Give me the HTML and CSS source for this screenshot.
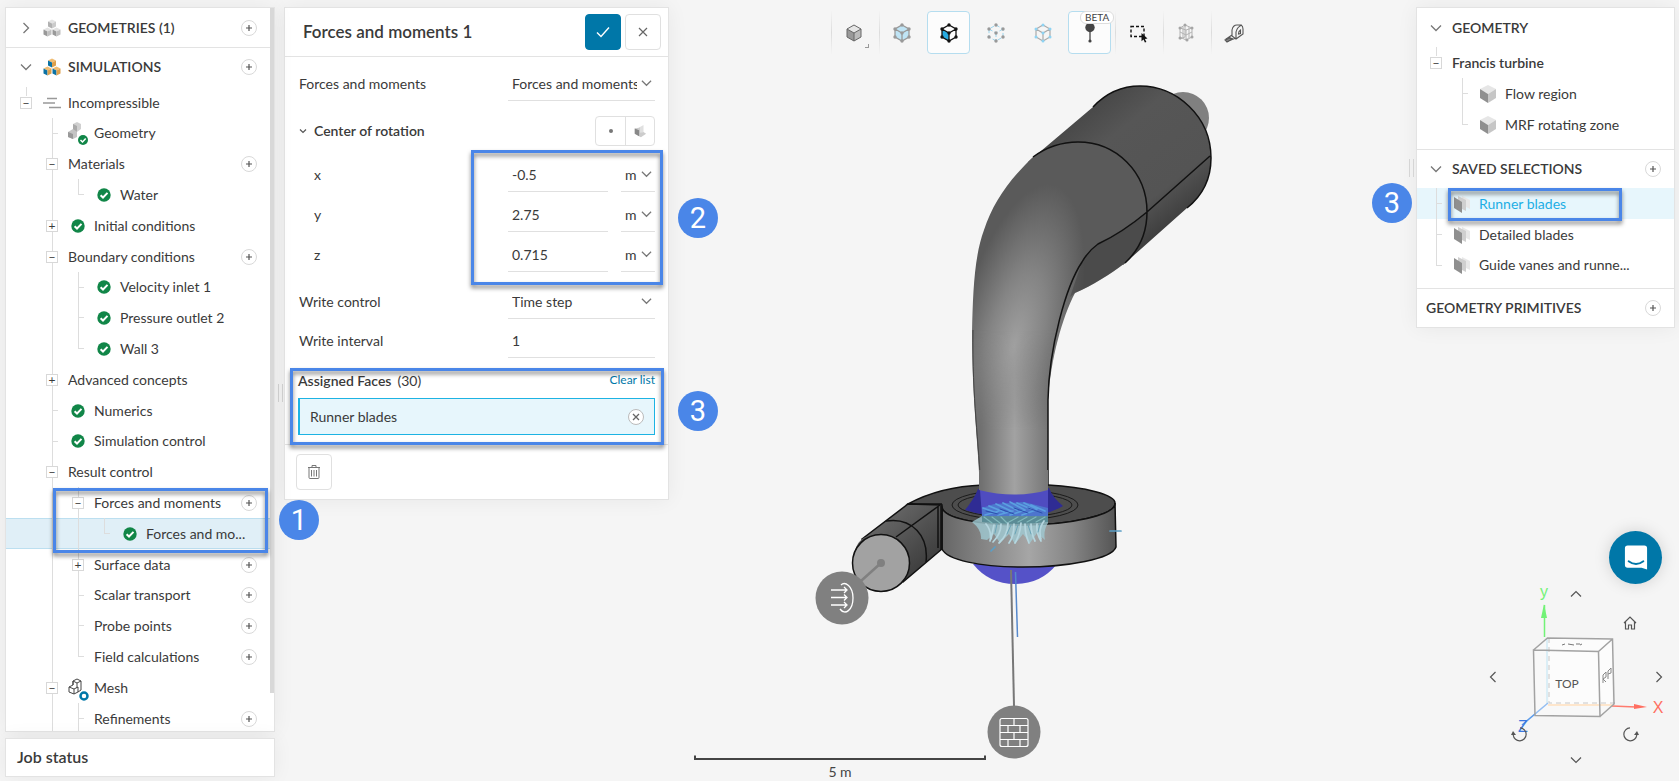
FILE: index.html
```html
<!DOCTYPE html>
<html lang="en">
<head>
<meta charset="utf-8">
<title>Forces and moments 1</title>
<link rel="stylesheet" href="styles.css">
</head>
<body>
<svg class="sprite" aria-hidden="true">
  <symbol id="check" viewBox="0 0 14 14"><circle cx="7" cy="7" r="6.7" fill="#118648"/><path d="M3.6 7.2l2.4 2.3 4.5-4.6" fill="none" stroke="#fff" stroke-width="2"/></symbol>
  <symbol id="plus" viewBox="0 0 16 16"><path d="M5 8h6M8 5v6" fill="none" stroke="#555" stroke-width="1.2"/></symbol>
  <symbol id="down" viewBox="0 0 12 12"><path d="M1 3.500l5 5 5-5" fill="none" stroke="#777" stroke-width="1.300"/></symbol>
  <symbol id="solid" viewBox="0 0 18 20"><path d="M9 1l8 4-8 5-8-5z" fill="#e6e6e6"/><path d="M1 5l8 5v9l-8-5z" fill="#8f8f8f"/><path d="M17 5l-8 5v9l8-5z" fill="#c6c6c6"/></symbol>
  <symbol id="faces" viewBox="0 0 18 18"><path d="M9 1l8 4v9l-8-4z" fill="#e8e8e8"/><path d="M5 1l8 4v11l-8-4z" fill="#cfcfcf"/><path d="M1 2l8 5v11l-8-5z" fill="#8f8f8f"/></symbol>
  <symbol id="cubes" viewBox="0 0 18 17"><path d="M9 0l4 2-4 2-4-2z" fill="#e3e3e3"/><path d="M5 2l4 2v5L5 7z" fill="#b1b1b1"/><path d="M13 2L9 4v5l4-2z" fill="#cbcbcb"/><path d="M4.500 8l4 2-4 2-4-2zM13.500 8l4 2-4 2-4-2z" fill="#e3e3e3"/><path d="M.5 10l4 2v5l-4-2zM9.500 10l4 2v5l-4-2z" fill="#999"/><path d="M8.500 10l-4 2v5l4-2zM17.500 10l-4 2v5l4-2z" fill="#c0c0c0"/></symbol>
  <symbol id="simcubes" viewBox="0 0 18 17"><path d="M9 0l4 2-4 2-4-2z" fill="#f0bd73"/><path d="M5 2l4 2v5L5 7z" fill="#0b72a4"/><path d="M13 2L9 4v5l4-2z" fill="#dda04c"/><path d="M4.500 8l4 2-4 2-4-2zM13.500 8l4 2-4 2-4-2z" fill="#f0bd73"/><path d="M.5 10l4 2v5l-4-2zM9.500 10l4 2v5l-4-2z" fill="#0b72a4"/><path d="M8.500 10l-4 2v5l4-2zM17.500 10l-4 2v5l4-2z" fill="#dda04c"/></symbol>
</svg>

<div class="app">
  <div class="left">
    <nav class="panel tree" aria-label="Project">
      <div class="tree-body">
        <div class="head ruled"><span class="cell"><svg class="chev side"><use href="#down"/></svg></span><span class="cell"><svg class="i18"><use href="#cubes"/></svg></span><span class="label">GEOMETRIES (1)</span><button class="add" aria-label="Add geometry"><svg><use href="#plus"/></svg></button></div>
        <div class="head"><span class="cell"><svg class="chev"><use href="#down"/></svg></span><span class="cell"><svg class="i18"><use href="#simcubes"/></svg></span><span class="label">SIMULATIONS</span><button class="add" aria-label="Add simulation"><svg><use href="#plus"/></svg></button></div>
        <div class="nodes">
          <div class="node"><span class="cell stub"><i class="box">−</i></span><span class="cell"><svg class="i18" viewBox="0 0 18 12"><path d="M4 1.500h10M0 6h12M6 10.500h12" stroke="#999" stroke-width="1.500"/></svg></span><span class="label">Incompressible</span></div>
          <div class="node"><span class="cell"></span><span class="cell line tee"></span><span class="cell"><svg class="i22" viewBox="0 0 22 22"><path d="M6 2l4-2 4 2v5l-4 3-4-1z" fill="#d0d0d0"/><path d="M6 2l4 2v6l-4-1z" fill="#aaa"/><path d="M1 10l5-3 4 3v5l-4 2-5-2z" fill="#c4c4c4"/><path d="M1 10l5 2v5l-5-2z" fill="#999"/><circle cx="16" cy="18" r="5" fill="#118648"/><path d="M13.500 18l2 2 3.200-3.500" stroke="#fff" stroke-width="1.500" fill="none"/></svg></span><span class="label">Geometry</span></div>
          <div class="node"><span class="cell"></span><span class="cell line"><i class="box">−</i></span><span class="label">Materials</span><button class="add" aria-label="Add material"><svg><use href="#plus"/></svg></button></div>
          <div class="node"><span class="cell"></span><span class="cell line"></span><span class="cell line end"></span><span class="cell"><svg class="i14"><use href="#check"/></svg></span><span class="label">Water</span></div>
          <div class="node"><span class="cell"></span><span class="cell line"><i class="box">+</i></span><span class="cell"><svg class="i14"><use href="#check"/></svg></span><span class="label">Initial conditions</span></div>
          <div class="node"><span class="cell"></span><span class="cell line"><i class="box">−</i></span><span class="label">Boundary conditions</span><button class="add" aria-label="Add boundary condition"><svg><use href="#plus"/></svg></button></div>
          <div class="node"><span class="cell"></span><span class="cell line"></span><span class="cell line tee"></span><span class="cell"><svg class="i14"><use href="#check"/></svg></span><span class="label">Velocity inlet 1</span></div>
          <div class="node"><span class="cell"></span><span class="cell line"></span><span class="cell line tee"></span><span class="cell"><svg class="i14"><use href="#check"/></svg></span><span class="label">Pressure outlet 2</span></div>
          <div class="node"><span class="cell"></span><span class="cell line"></span><span class="cell line end"></span><span class="cell"><svg class="i14"><use href="#check"/></svg></span><span class="label">Wall 3</span></div>
          <div class="node"><span class="cell"></span><span class="cell line"><i class="box">+</i></span><span class="label">Advanced concepts</span></div>
          <div class="node"><span class="cell"></span><span class="cell line tee"></span><span class="cell"><svg class="i14"><use href="#check"/></svg></span><span class="label">Numerics</span></div>
          <div class="node"><span class="cell"></span><span class="cell line tee"></span><span class="cell"><svg class="i14"><use href="#check"/></svg></span><span class="label">Simulation control</span></div>
          <div class="node"><span class="cell"></span><span class="cell line"><i class="box">−</i></span><span class="label">Result control</span></div>
          <div class="node"><span class="cell"></span><span class="cell line"></span><span class="cell line"><i class="box">−</i></span><span class="label">Forces and moments</span><button class="add" aria-label="Add forces and moments"><svg><use href="#plus"/></svg></button></div>
          <div class="node current"><span class="cell"></span><span class="cell line"></span><span class="cell line"></span><span class="cell line end"></span><span class="cell"><svg class="i14"><use href="#check"/></svg></span><span class="label">Forces and mo...</span></div>
          <div class="node"><span class="cell"></span><span class="cell line"></span><span class="cell line"><i class="box">+</i></span><span class="label">Surface data</span><button class="add" aria-label="Add surface data"><svg><use href="#plus"/></svg></button></div>
          <div class="node"><span class="cell"></span><span class="cell line"></span><span class="cell line tee"></span><span class="label">Scalar transport</span><button class="add" aria-label="Add scalar transport"><svg><use href="#plus"/></svg></button></div>
          <div class="node"><span class="cell"></span><span class="cell line"></span><span class="cell line tee"></span><span class="label">Probe points</span><button class="add" aria-label="Add probe point"><svg><use href="#plus"/></svg></button></div>
          <div class="node"><span class="cell"></span><span class="cell line"></span><span class="cell line end"></span><span class="label">Field calculations</span><button class="add" aria-label="Add field calculation"><svg><use href="#plus"/></svg></button></div>
          <div class="node"><span class="cell"></span><span class="cell line"><i class="box">−</i></span><span class="cell"><svg class="i22" viewBox="0 0 22 22" fill="none" stroke="#444"><path d="M6 4l4-2 4 2v9l-3 2-4 2-5-2v-5l4-2zM6 4l4 2 4-2M10 6v5M2 10l5 2 4-2M7 12v5M6 4v4M11 10v5"/><circle cx="17" cy="19" r="3.500" fill="#fff" stroke="#0077a8" stroke-width="2.500"/></svg></span><span class="label">Mesh</span></div>
          <div class="node"><span class="cell"></span><span class="cell line"></span><span class="cell line tee"></span><span class="label">Refinements</span><button class="add" aria-label="Add refinement"><svg><use href="#plus"/></svg></button></div>
        </div>
      </div>
      <div class="callout callout-tree"></div>
      <span class="badge badge-tree">1</span>
    </nav>
    <section class="panel job">Job status</section>
  </div>

  <div class="splitter"></div>

  <div class="middle">
    <form class="panel form">
      <header class="form-head">
        <h1>Forces and moments 1</h1>
        <button type="button" class="btn primary" aria-label="Apply"><svg viewBox="0 0 16 16"><path d="M2 8.500l4 4 8-9" fill="none" stroke="#fff" stroke-width="1.400"/></svg></button>
        <button type="button" class="btn" aria-label="Close"><svg viewBox="0 0 16 16"><path d="M4 4l8 8M12 4l-8 8" fill="none" stroke="#666" stroke-width="1.200"/></svg></button>
      </header>
      <div class="field first"><label for="kind">Forces and moments</label><span class="pick"><select id="kind"><option>Forces and moments</option></select><svg class="chev"><use href="#down"/></svg></span></div>
      <div class="group"><svg class="caret" viewBox="0 0 8 8"><path d="M1 2.500l3 3 3-3" fill="none" stroke="#555" stroke-width="1.200"/></svg><h2>Center of rotation</h2>
        <span class="pair"><button type="button" aria-label="Pick point"><svg viewBox="0 0 16 16"><circle cx="8" cy="8" r="2.300" fill="#777"/></svg></button><button type="button" aria-label="Pick from geometry"><svg viewBox="0 0 16 16"><path d="M7 4l5-3v8l-5 2z" fill="#e0e0e0"/><path d="M2 5l6-1v6l4-1 3 2-6 4-7-4z" fill="#ccc"/><path d="M2 5l5 2v7l-5-3z" fill="#888"/></svg></button></span></div>
      <div class="field axis"><label for="x">x</label><input id="x" value="-0.5"><span class="pick unit"><select aria-label="x unit"><option>m</option></select><svg class="chev"><use href="#down"/></svg></span></div>
      <div class="field axis"><label for="y">y</label><input id="y" value="2.75"><span class="pick unit"><select aria-label="y unit"><option>m</option></select><svg class="chev"><use href="#down"/></svg></span></div>
      <div class="field axis"><label for="z">z</label><input id="z" value="0.715"><span class="pick unit"><select aria-label="z unit"><option>m</option></select><svg class="chev"><use href="#down"/></svg></span></div>
      <div class="field tall"><label for="wc">Write control</label><span class="pick"><select id="wc"><option>Time step</option></select><svg class="chev"><use href="#down"/></svg></span></div>
      <div class="field"><label for="wi">Write interval</label><input id="wi" value="1"></div>
      <div class="assigned">
        <div class="assigned-head"><h2>Assigned Faces</h2><span>(30)</span><a href="#clear">Clear list</a></div>
        <div class="chip">Runner blades<button type="button" aria-label="Remove Runner blades"><svg viewBox="0 0 14 14"><path d="M4 4l6 6M10 4l-6 6" stroke="#666" stroke-width="1.300"/></svg></button></div>
      </div>
      <footer><button type="button" class="btn" aria-label="Delete"><svg viewBox="0 0 16 16" fill="none" stroke="#777"><path d="M2 3.500h12M6 3V1.500h4V3M3 4v9.500q0 1 1 1h8q1 0 1-1V4M5.500 6v6.500M8 6v6.500M10.500 6v6.500"/></svg></button></footer>
      <div class="callout callout-axes"></div>
      <div class="callout callout-faces"></div>
      <span class="badge badge-axes">2</span>
      <span class="badge badge-faces">3</span>
    </form>
  </div>

  <main class="stage">
    <svg class="model" viewBox="669 0 735 781" role="img" aria-label="Francis turbine model">
      <defs>
        <linearGradient id="low" x1="981" x2="1048" y1="0" y2="0" gradientUnits="userSpaceOnUse"><stop offset="0" stop-color="#707070"/><stop offset=".5" stop-color="#a2a2a2"/><stop offset="1" stop-color="#777"/></linearGradient>
        <radialGradient id="bend" cx="0" cy="0" r="1" gradientUnits="userSpaceOnUse" gradientTransform="translate(1014 345) rotate(14) scale(60 165)"><stop offset="0" stop-color="#a0a0a0"/><stop offset=".45" stop-color="#848484"/><stop offset="1" stop-color="#5a5a5a"/></radialGradient>
        <linearGradient id="top" x1="1080" y1="115" x2="1170" y2="230" gradientUnits="userSpaceOnUse"><stop offset="0" stop-color="#484848"/><stop offset=".25" stop-color="#565656"/><stop offset=".75" stop-color="#545454"/><stop offset="1" stop-color="#3c3c3c"/></linearGradient>
        <linearGradient id="fade" x1="0" x2="0" y1="330" y2="430" gradientUnits="userSpaceOnUse"><stop offset="0" stop-color="#fff" stop-opacity="0"/><stop offset="1" stop-color="#fff"/></linearGradient>
        <mask id="lowmask"><path d="M960 320h120v180H960z" fill="url(#fade)"/></mask>
        <linearGradient id="side" x1="942" x2="1116" y1="0" y2="0" gradientUnits="userSpaceOnUse"><stop offset="0" stop-color="#666"/><stop offset=".5" stop-color="#a6a6a6"/><stop offset=".75" stop-color="#848484"/><stop offset="1" stop-color="#555"/></linearGradient>
        <linearGradient id="duct" x1="880" y1="520" x2="925" y2="570" gradientUnits="userSpaceOnUse"><stop offset="0" stop-color="#666"/><stop offset="1" stop-color="#3c3c3c"/></linearGradient>
        <clipPath id="pipeclip"><path d="M972 320h92c-10 30-15 50-16 80v96H980c-1-50-8-90-8-176z"/></clipPath>
      </defs>
      <circle cx="1183" cy="118" r="26" fill="#808080"/>
      <path d="M1093 107C1107 92 1122 86 1140 86c36 0 71 30 71 72 0 21-9 38-24 50l-64 57-95-103z" fill="url(#top)"/>
      <path d="M1033 157C1048 146 1062 142 1078 142c38 0 69 30 69 70 0 21-8 38-22 51-16 12-32 22-50 30-13 25-24 65-27 107l0 96H980c-1-50-8-90-8-164 1-38 2-75 12-102 9-27 24-49 49-73z" fill="url(#bend)"/>
      <path d="M973 330l110-10-35 80v96H980c-1-50-8-90-7-166z" fill="url(#low)" mask="url(#lowmask)" clip-path="url(#pipeclip)"/>
      <path d="M1147 212c-18 15-34 25-49 32-7 5-12 11-16 18l-12 35 5-4c18-8 34-18 50-30 14-13 22-30 22-51z" fill="#303030" opacity=".35"/>
      <g fill="none" stroke="#111" stroke-width="1.500">
        <path d="M1093 107C1107 92 1122 86 1140 86c36 0 71 30 71 72 0 21-9 38-24 50M1033 157C1048 146 1062 142 1078 142c38 0 69 30 69 70 0 21-8 38-22 51M1210 156l-63 56c-18 15-34 25-49 32-7 5-12 11-16 18-16 24-33 85-34 138v92"/>
        <path d="M973 330c-1 70 6 110 8 164" stroke="#444" stroke-width="1"/>
      </g>
      <path d="M973 564q16 20 42 20t42-20z" fill="#5552c8"/>
      <path d="M908 504c22-12 48-18 75-19h65c38 2 67 10 67 18 1 12-45 22-92 22-46 0-80-7-81-18z" fill="#4d4d4d" stroke="#111" stroke-width="1.500"/>
      <path d="M942 507c1 11 35 18 81 18 47 0 93-10 92-22l1 44c-4 12-48 20-93 20-43 0-76-7-81-18z" fill="url(#side)" stroke="#111" stroke-width="1.500"/>
      <g fill="none" stroke="#1b1b1b"><ellipse cx="1015" cy="505" rx="63" ry="15"/><ellipse cx="1015" cy="505" rx="57" ry="12"/></g>
      <path d="M978 489q-4 10-13 21 20 7 50 7t48-11q-10-8-14-18z" fill="#2f2c94"/>
      <path d="M980 490h68v26q-33 4-66 0z" fill="#4f4cc0"/>
      <path d="M979 470h69v20q-33 9-69 0z" fill="url(#low)"/>
      <path d="M982 508l12-4 30-2 24 6v8h-66z" fill="#4c7fd0" opacity=".8"/>
      <path d="M982 516h66v7q-5 8-3 17l-8-7-7 10-7-9-8 10-6-10-9 9-6-9-7 6-6-1q1-9-9-17z" fill="#9fc9d2" opacity=".8"/>
      <path d="M982 516h66v6q-33 4-66 0z" fill="#467d88" opacity=".7"/>
      <g fill="none" stroke-width="1.700" stroke-linecap="round">
        <path d="M983 508l14 5M989 506l15 6M996 504l15 7M1003 503l14 7M1010 502l15 8M1017 503l14 6M1024 503l13 6M1031 505l14 6M985 515l14-4M998 515l15-4M1010 515l15-5M1022 515l14-5" stroke="#5a9fe0"/>
        <path d="M986 511l12 3M1000 509l14 5M1014 508l14 5M1028 508l14 5" stroke="#2c4eac" stroke-width="1"/>
        <path d="M984 517l8 6M992 517l8 6M1001 517l6 6M1009 522l9-5M1018 522l9-5M1027 522l9-5M1036 522l9-5" stroke="#80b8bb" stroke-width="1.200"/>
        <path d="M986 524q6 7 4 17M994 525l-3 14M1001 524q0 10-8 18M1008 523q0 12-9 20M1014 524q0 12-5 19M1021 523q-1 12-6 20M1025 524q0 10 4 19M1031 524q0 9 4 17M1037 524q-1 9 4 17M1044 521q-6 8-3 18" stroke="#b5d6df"/>
        <path d="M997 524l-2 9M1011 525l-4 9M1018 525l-3 9M1028 525l3 9M1040 524l-2 8" stroke="#6ba5b8" stroke-width="1"/>
        <path d="M1110 531h11M995 547l-4 4" stroke="#5b9fc6"/>
      </g>
      <path d="M862 539l46-35 34 1v44l-39 33z" fill="url(#duct)" stroke="#111" stroke-width="1.500"/>
      <path d="M853 559q2-14 9-20c12-8 34-4 41 14 3 11 1 22-2 31z" fill="#5a5a5a"/>
      <circle cx="881" cy="563" r="28.500" fill="#a2a2a2" stroke="#111" stroke-width="1.500"/>
      <path d="M886 521c26-4 43 15 40 41M896 537l44-32M908 504h34M938 507v41M941 506v44" fill="none" stroke="#111" stroke-width="1.500"/>
      <path d="M881 563l-39 35" stroke="#808080" stroke-width="2.500"/><circle cx="881" cy="563" r="4" fill="#808080"/>
      <circle cx="842" cy="598" r="26.500" fill="#808080"/>
      <g fill="none" stroke="#fff" stroke-width="1.300"><path d="M831 590h15M831 597.500h15M831 605h15M844 587l3 3-3 3M844 594.500l3 3-3 3M844 602l3 3-3 3M841 585c4-4 12 1 12 13s-8 18-13 11"/></g>
      <path d="M1011 570l3 136" stroke="#777" stroke-width="2"/><path d="M1015.500 572l2 65" stroke="#5588cc" stroke-width="1.500"/>
      <circle cx="1014" cy="732" r="26.500" fill="#808080"/>
      <path d="M1002 718.500h24q2 0 2 2v24q0 2-2 2h-24q-2 0-2-2v-24q0-2 2-2zM1000 725.500h28M1000 732.500h28M1000 739.500h28M1014 718v7M1008 726v7M1020 726v7M1014 733v7M1008 740v6M1020 740v6" fill="none" stroke="#fff" stroke-width="1.200"/>
      <path d="M695 755.500v3.500h290v-3.500" fill="none" stroke="#444" stroke-width="2"/>
      <text class="scale" x="840" y="777" text-anchor="middle">5 m</text>
    </svg>
    <div class="toolbar">
      <button class="tool split" aria-label="Solid view"><svg viewBox="0 0 24 24"><path d="M12 4l7 4-7 4-7-4z" fill="#e5e5e5"/><path d="M5 8l7 4v8l-7-4z" fill="#999"/><path d="M19 8l-7 4v8l7-4z" fill="#bbb"/><path d="M12 4l7 4v8l-7 4-7-4V8zM5 8l7 4 7-4M12 12v8" fill="none" stroke="#666"/></svg><i class="corner"></i></button>
      <button class="tool split" aria-label="Select volumes"><svg viewBox="0 0 24 24"><path d="M12 4l7 4v8l-7 4-7-4V8z" fill="#bfe4f5"/><path d="M12 4l7 4v8l-7 4-7-4V8zM5 8l7 4 7-4M12 12v8" fill="none" stroke="#999" stroke-width="1.300"/><g fill="#999"><circle cx="12" cy="4" r="1.700"/><circle cx="19" cy="8" r="1.700"/><circle cx="19" cy="16" r="1.700"/><circle cx="12" cy="20" r="1.700"/><circle cx="5" cy="16" r="1.700"/><circle cx="5" cy="8" r="1.700"/><circle cx="12" cy="12" r="1.700"/></g></svg></button>
      <button class="tool on" aria-label="Select faces"><svg viewBox="0 0 24 24"><path d="M5 8l7 4v8l-7-4z" fill="#28abe2"/><path d="M12 4l7 4v8l-7 4-7-4V8zM5 8l7 4 7-4M12 12v8" fill="none" stroke="#111" stroke-width="1.300"/><g fill="#111"><circle cx="12" cy="4" r="1.700"/><circle cx="19" cy="8" r="1.700"/><circle cx="19" cy="16" r="1.700"/><circle cx="12" cy="20" r="1.700"/><circle cx="5" cy="16" r="1.700"/><circle cx="5" cy="8" r="1.700"/><circle cx="12" cy="12" r="1.700"/></g></svg></button>
      <button class="tool" aria-label="Select vertices"><svg viewBox="0 0 24 24"><path d="M12 4l7 4v8l-7 4-7-4V8zM5 8l7 4 7-4M12 12v8" fill="none" stroke="#9cd6ef" stroke-dasharray="4 2"/><g fill="#999"><circle cx="12" cy="4" r="1.700"/><circle cx="19" cy="8" r="1.700"/><circle cx="19" cy="16" r="1.700"/><circle cx="12" cy="20" r="1.700"/><circle cx="5" cy="16" r="1.700"/><circle cx="5" cy="8" r="1.700"/><circle cx="12" cy="12" r="1.700"/></g></svg></button>
      <button class="tool" aria-label="Select edges"><svg viewBox="0 0 24 24"><path d="M12 4l7 4v8l-7 4-7-4V8zM5 8l7 4 7-4M12 12v8" fill="none" stroke="#aaa" stroke-width="1.200"/><g fill="#8ed3f3"><circle cx="12" cy="4" r="1.500"/><circle cx="19" cy="8" r="1.500"/><circle cx="19" cy="16" r="1.500"/><circle cx="12" cy="20" r="1.500"/><circle cx="5" cy="16" r="1.500"/><circle cx="5" cy="8" r="1.500"/><circle cx="12" cy="12" r="1.500"/></g></svg></button>
      <button class="tool on" aria-label="Probe"><svg viewBox="0 0 24 24"><circle cx="12" cy="6.500" r="4.700" fill="#444"/><path d="M12 7v13" stroke="#444" stroke-width="1.300"/><circle cx="12" cy="20" r="1.600" fill="#444"/></svg><span class="beta">BETA</span></button>
      <button class="tool split" aria-label="Box select"><svg viewBox="0 0 24 24"><path d="M5 5.500h13v10H5z" fill="none" stroke="#111" stroke-width="1.400" stroke-dasharray="3 2"/><path d="M15.500 12l6 5.500-2.600.4 1.500 3-1.500.7-1.400-3-2 1.600z" fill="#111"/></svg></button>
      <button class="tool split" aria-label="Mesh clip"><svg viewBox="0 0 24 24" fill="none" stroke="#b3b3b3"><path d="M6 7l5-3 7 3v9l-6 3-6-3zM6 7l6 2 6-2M12 9v10M6 11l6 3 6-3M9 6v11M15 6v11M11 4v12l-5 2"/><g fill="#a5a5a5" stroke="none"><circle cx="6" cy="7" r="1.500"/><circle cx="11" cy="4" r="1.500"/><circle cx="18" cy="7" r="1.500"/><circle cx="18" cy="16" r="1.500"/><circle cx="13" cy="19" r="1.500"/><circle cx="6" cy="17" r="1.500"/></g></svg></button>
      <button class="tool split" aria-label="Measure"><svg viewBox="0 0 24 24" fill="none" stroke="#555" stroke-width="1.100"><path d="M10 15V9q1-5 5-5h4q2 1 2 4v5l-7 5-4-3zM14 18v-7q1-5 6-7M16.500 13q0-3 2-4v3.500zM10 14l-6 4 2 2 8-3M5 18l4 1M7 16.500l4 1.500"/><path d="M3 19l5-2 2 1-5 3z" fill="#888"/></svg></button>
    </div>
  </main>

  <aside class="right">
    <div class="panel scene">
      <section class="block">
        <div class="head"><span class="cell"><svg class="chev"><use href="#down"/></svg></span><span class="label">GEOMETRY</span></div>
        <div class="node strong"><span class="cell stub"><i class="box">−</i></span><span class="label">Francis turbine</span></div>
        <div class="node"><span class="cell"></span><span class="cell line tee"></span><span class="cell"><svg class="cube"><use href="#solid"/></svg></span><span class="label">Flow region</span></div>
        <div class="node"><span class="cell"></span><span class="cell line end"></span><span class="cell"><svg class="cube"><use href="#solid"/></svg></span><span class="label">MRF rotating zone</span></div>
      </section>
      <section class="block saved">
        <div class="head"><span class="cell"><svg class="chev"><use href="#down"/></svg></span><span class="label">SAVED SELECTIONS</span><button class="add" aria-label="Add selection"><svg><use href="#plus"/></svg></button></div>
        <div class="node picked"><span class="cell line tee"></span><span class="cell"><svg class="i18"><use href="#faces"/></svg></span><span class="label">Runner blades</span></div>
        <div class="node"><span class="cell line tee"></span><span class="cell"><svg class="i18"><use href="#faces"/></svg></span><span class="label">Detailed blades</span></div>
        <div class="node"><span class="cell line end"></span><span class="cell"><svg class="i18"><use href="#faces"/></svg></span><span class="label">Guide vanes and runne...</span></div>
      </section>
      <section class="prims"><div class="head"><span class="label">GEOMETRY PRIMITIVES</span><button class="add" aria-label="Add primitive"><svg><use href="#plus"/></svg></button></div></section>
      <span class="grip"></span>
      <div class="callout callout-scene"></div>
      <span class="badge badge-scene">3</span>
    </div>
    <div class="corner-tools">
      <button class="chat" aria-label="Open chat"><svg viewBox="0 0 26 28"><path d="M4 1h18q3 0 3 3v23l-6-2H4q-3 0-3-3V4q0-3 3-3z" fill="#fff"/><path d="M5 18q8 6 16 0" fill="none" stroke="#0077a8" stroke-width="2" stroke-linecap="round"/></svg></button>
      <div class="navcube">
        <svg class="cube3d" viewBox="1484 575 191 200" role="img" aria-label="View cube">
          <g fill="none">
            <path d="M1548 637l64 1.500 0 64.500-2 1-61-.500z" fill="#fff" opacity=".6"/>
            <path d="M1547 704v-65" stroke="#b8dff0" stroke-width="1.500"/><path d="M1544.500 605v32" stroke="#72f277" stroke-width="1.500"/><path d="M1544 604l-3 14h6z" fill="#72f277"/>
            <path d="M1548 705h64" stroke="#ffcf9a" stroke-width="1.500"/><path d="M1612 706l24 1" stroke="#ff7b6e" stroke-width="1.500"/><path d="M1647 707l-13-3v5z" fill="#ff6f61"/>
            <path d="M1548 703l-26 22" stroke="#5b9bea" stroke-width="1.500"/>
            <path d="M1549 638v65h66" stroke="#aaa" stroke-dasharray="5 4"/>
            <path d="M1533.500 650l65 1.500 1.500 65-65-1zM1533.500 650l14-12 65 1 1.500 65-14 12.500M1598.500 651.500l14-12.500" fill="#fff" fill-opacity=".35" stroke="#a2a2a2" stroke-width="1.500"/>
            <path d="M1562 645l3-1M1568 644l6 1M1576 644h4M1582 644l-2 1" stroke="#777"/>
            <path d="M1603 683v-8l3-3v5l-3 2 3 3M1608 679v-8l3-3v5l-3 1" stroke="#888"/>
          </g>
          <text class="face" x="1567" y="688" text-anchor="middle">TOP</text>
          <text class="axis-name" x="1544" y="597" text-anchor="middle" fill="#72f277">y</text>
          <text class="axis-name" x="1658" y="713" text-anchor="middle" fill="#ff6f61">X</text>
          <text class="axis-name" x="1523" y="732" text-anchor="middle" fill="#3c78e0">Z</text>
        </svg>
        <button class="turn up" aria-label="Rotate up"><svg viewBox="0 0 14 14"><path d="M2 9.500l5-5 5 5" /></svg></button>
        <button class="turn home" aria-label="Home view"><svg viewBox="0 0 14 14"><path d="M1 7l6-6 6 6M2.500 6v7H5.500V9h3v4h3V6"/></svg></button>
        <button class="turn west" aria-label="Rotate left"><svg viewBox="0 0 14 14"><path d="M9.500 2l-5 5 5 5"/></svg></button>
        <button class="turn east" aria-label="Rotate right"><svg viewBox="0 0 14 14"><path d="M4.500 2l5 5-5 5"/></svg></button>
        <button class="turn down" aria-label="Rotate down"><svg viewBox="0 0 14 14"><path d="M2 4.500l5 5 5-5"/></svg></button>
        <button class="turn ccw" aria-label="Roll left"><svg viewBox="0 0 14 14"><path d="M8 .8A6.500 6.500 0 1 1 1.200 8"/><path d="M-1 8l2-4 3 4z" fill="#555" stroke="none"/></svg></button>
        <button class="turn cw" aria-label="Roll right"><svg viewBox="0 0 14 14"><path d="M6 .8A6.500 6.500 0 1 0 12.800 8"/><path d="M15 8l-2-4-3 4z" fill="#555" stroke="none"/></svg></button>
      </div>
    </div>
  </aside>
</div>
</body>
</html>
```
FILE: styles.css
```css
* { box-sizing: border-box; }
body { margin: 0; background: #f5f5f5; color: #3a3a3a; font: 14px/20px Lato, "Open Sans", sans-serif; }
button, input, select { font: inherit; color: inherit; }
button { display: flex; align-items: center; justify-content: center; padding: 0; background: none; border: 0; }
h1, h2 { margin: 0; }
svg { display: block; overflow: visible; flex: none; }
.sprite { position: absolute; width: 0; height: 0; }

.app { display: flex; height: 100vh; overflow: hidden; }
.panel { position: relative; background: #fff; border: 1px solid #e3e3e3; box-shadow: 0 0 20px rgba(0, 0, 0, .06); }

/* Side columns */
.left { display: flex; flex-direction: column; gap: 6px; width: 275px; flex: none; padding: 7px 0 4px 5px; position: relative; z-index: 2; }
.tree { flex: 1; min-height: 0; }
.tree-body { height: 100%; overflow: hidden; padding-right: 4px; background: linear-gradient(#d8d8d8, #d8d8d8) right top / 4px 685px no-repeat; }
.job { height: 39px; padding: 0 11px; font-size: 16px; line-height: 36px; font-weight: 600; }
.splitter { flex: none; align-self: center; width: 5px; height: 18px; margin: 4px 1px 0 3px; border: solid #d5d5d5; border-width: 0 1px; }

/* Trees */
.head, .node { display: flex; align-items: center; padding: 0 13px 0 7px; }
.head { height: 38px; font-weight: 600; }
.ruled { height: 40px; border-bottom: 1px solid #e3e3e3; }
.node { height: 31px; }
.nodes { padding-top: 1px; }
.nodes .node:nth-child(5n+2) { height: 30px; }
.cell { position: relative; display: flex; align-items: center; justify-content: center; align-self: stretch; width: 26px; flex: none; }
.label { flex: 1; padding-left: 3px; white-space: nowrap; }
.line::before { content: ""; position: absolute; left: 13px; top: 0; bottom: 0; border-left: 1px solid #ddd; }
.end::before { bottom: 15px; }
.tee::after, .end::after { content: ""; position: absolute; left: 13px; top: 15px; width: 6px; border-top: 1px solid #ddd; }
.stub::before { content: ""; position: absolute; left: 13px; top: 0; height: 9px; border-left: 1px solid #ddd; }
.box { position: relative; width: 12px; height: 12px; border: 1px solid #d8d8d8; background: #fff; font: 12px/9px Lato, sans-serif; text-align: center; }
.current { background: #e0eff7; box-shadow: inset 0 1px #bcdff0, inset 0 -1px #bcdff0; }
.add { width: 16px; height: 16px; border: 1px solid #d9d9d9; border-radius: 50%; background: #fff; flex: none; }
.add svg { width: 16px; height: 16px; }
.chev { width: 12px; height: 12px; }
.side { transform: rotate(-90deg); }
.i14 { width: 14px; height: 14px; }
.i18 { width: 18px; height: 18px; }
.i22 { width: 22px; height: 22px; }
.cube { width: 18px; height: 20px; }

/* Settings form */
.middle { width: 385px; flex: none; padding-top: 7px; position: relative; z-index: 1; }
.form-head { display: flex; align-items: center; gap: 4px; height: 49px; padding: 0 7px 0 18px; border-bottom: 1px solid #e3e3e3; margin-bottom: 4px; }
.form-head h1 { flex: 1; font-size: 17px; line-height: 24px; font-weight: 600; }
.btn { width: 36px; height: 36px; border: 1px solid #e0e0e0; border-radius: 4px; background: #fff; }
.btn svg { width: 16px; height: 16px; }
.primary { background: #0077a8; border-color: #0077a8; }
.field { display: flex; align-items: flex-end; height: 39px; padding: 0 13px 0 14px; }
.field label { flex: 1; line-height: 34px; }
.field input, .pick { width: 147px; height: 34px; border: 0; border-bottom: 1px solid #e0e0e0; padding: 0 4px; background: none; }
.axis { height: 40px; padding-left: 29px; }
.tall { height: 47px; }
.first { height: 40px; }
.axis input { width: 100px; margin-right: 13px; }
.pick { position: relative; padding: 0; }
.pick select { appearance: none; width: 100%; height: 33px; border: 0; padding: 0 18px 0 4px; background: none; }
.pick .chev { position: absolute; right: 3px; top: 10px; width: 11px; }
.field .unit { width: 34px; }
.group { display: flex; align-items: center; height: 51px; padding: 8px 13px 0 14px; }
.caret { width: 8px; height: 8px; margin-right: 7px; }
h2 { font-size: 14px; font-weight: 600; }
.group h2 { flex: 1; }
.pair { display: flex; border: 1px solid #e0e0e0; border-radius: 4px; }
.pair button { width: 29px; height: 28px; }
.pair button + button { border-left: 1px solid #e0e0e0; }
.pair svg { width: 14px; height: 14px; }
.assigned { padding: 13px 13px 9px; border-bottom: 1px solid #e3e3e3; }
.assigned-head { display: flex; gap: 6px; margin-bottom: 7px; }
.assigned-head a { margin-left: auto; color: #0077a8; font-size: 12px; line-height: 18px; text-decoration: none; }
.chip { display: flex; align-items: center; justify-content: space-between; height: 37px; padding: 0 10px; border: 1px solid #1db3e3; border-left-width: 2px; background: #e7f6fc; }
.chip button { width: 16px; height: 16px; border: 1px solid #bbb; border-radius: 50%; background: #fff; }
.chip svg { width: 14px; height: 14px; }
.form footer { padding: 9px 11px; }

/* Callouts */
.callout { position: absolute; border: 3px solid #4a86e8; filter: drop-shadow(0 3px 2px rgba(0, 0, 0, .5)); pointer-events: none; }
.badge { position: absolute; width: 40px; height: 40px; border-radius: 50%; background: #4a86e8; color: #fff; font: 29px/41px Roboto, sans-serif; text-align: center; }
.callout-tree { left: 47px; top: 480px; width: 215px; height: 65px; }
.badge-tree { left: 273px; top: 492px; }
.callout-axes { left: 186px; top: 142px; width: 192px; height: 135px; }
.callout-faces { left: 5px; top: 360px; width: 374px; height: 77px; }
.badge-axes { left: 393px; top: 190px; }
.badge-faces { left: 393px; top: 383px; }
.callout-scene { left: 31px; top: 180px; width: 174px; height: 33px; }
.badge-scene { left: -45px; top: 175px; }

/* Stage */
.stage { position: relative; flex: 1; min-width: 0; }
.model { width: 100%; height: 100%; }
.scale { font: 14px Lato, sans-serif; fill: #444; }
.toolbar { position: absolute; top: 11px; left: 13px; right: 0; display: flex; justify-content: center; gap: 4px; }
.tool { position: relative; width: 43px; height: 43px; }
.tool svg { width: 24px; height: 24px; }
.split { width: 44px; border-left: 1px solid; border-image: linear-gradient(#f5f5f5, #dcdcdc, #f5f5f5) 1; }
.on { border: 1px solid #b5ddef; border-radius: 4px; background: #fcfcfc; }
.corner { position: absolute; right: 6px; bottom: 6px; width: 4px; height: 4px; border: solid #999; border-width: 0 1px 1px 0; }
.beta { position: absolute; left: 11px; top: -1px; padding: 0 4px; border: 1px solid #ddd; border-radius: 6px; background: #fff; font-size: 10px; line-height: 11px; color: #444; }

/* Scene panel */
.right { display: flex; flex-direction: column; justify-content: space-between; width: 275px; flex: none; padding: 7px 4px 6px 12px; position: relative; z-index: 1; }
.scene .head, .scene .node { padding-left: 6px; padding-right: 13px; }
.scene .node .label { padding-left: 4px; }
.scene .strong .label { padding-left: 3px; }
.block { padding-bottom: 9px; border-bottom: 1px solid #e3e3e3; }
.block:first-child { padding-top: 1px; }
.saved { padding-bottom: 8px; }
.saved .node:last-child { height: 30px; }
.strong { font-weight: 600; }
.picked { background: #e7f6fc; color: #1daee5; }
.grip { position: absolute; left: -8px; top: 50%; width: 5px; height: 18px; margin-top: -9px; border: solid #d5d5d5; border-width: 0 1px; }
.corner-tools { display: flex; flex-direction: column; align-items: flex-end; }
.chat { width: 53px; height: 53px; margin-right: 13px; margin-bottom: -9px; border-radius: 50%; background: #0077a8; box-shadow: 0 0 16px rgba(0, 0, 0, .15); }
.chat svg { width: 24px; height: 27px; }
.navcube { position: relative; width: 191px; height: 200px; }
.cube3d { width: 191px; height: 200px; }
.face { font: 12px Lato, sans-serif; fill: #555; }
.axis-name { font: 16px "Liberation Sans", sans-serif; }
.turn { position: absolute; }
.turn svg { width: 14px; height: 14px; fill: none; stroke: #555; stroke-width: 1.2; }
.up { left: 85px; top: 12px; }
.home { left: 139px; top: 41px; }
.west { left: 2px; top: 95px; }
.east { left: 168px; top: 95px; }
.down { left: 85px; top: 178px; }
.ccw { left: 28px; top: 152px; }
.cw { left: 140px; top: 152px; }
```
